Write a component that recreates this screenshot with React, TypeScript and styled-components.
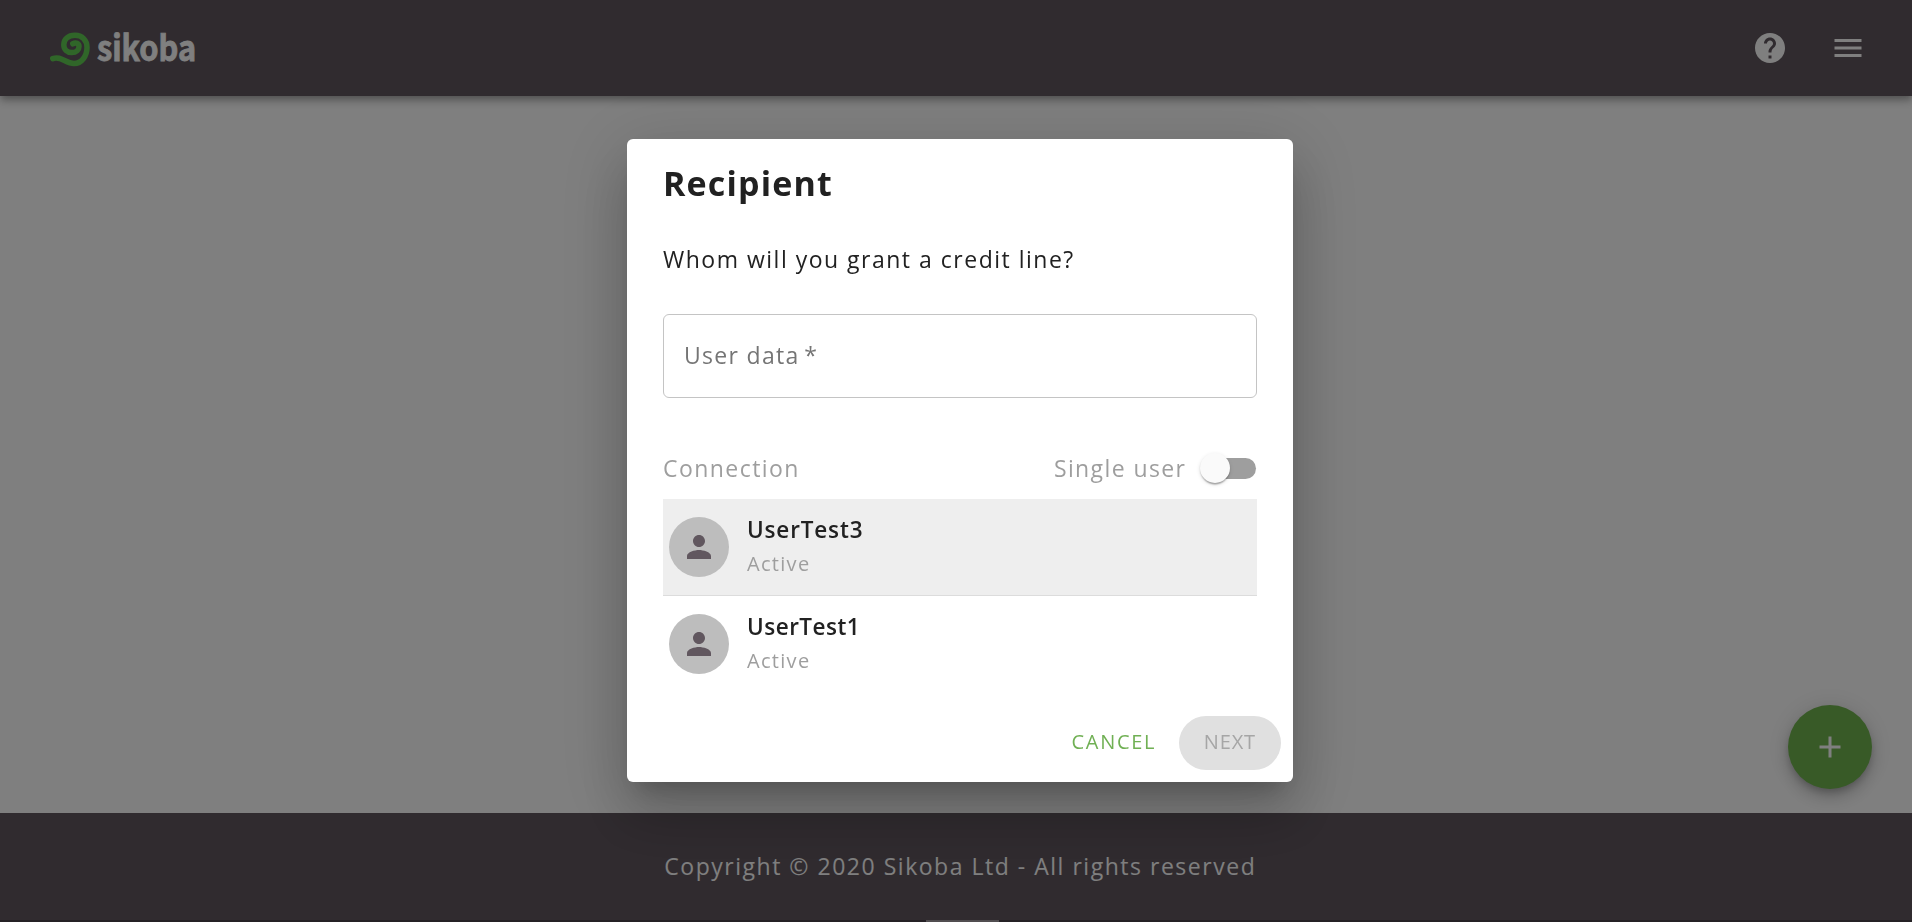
import React from 'react';
import styled, { createGlobalStyle } from 'styled-components';

const GlobalStyle = createGlobalStyle`
  * { box-sizing: border-box; }
  body { margin: 0; overflow: hidden; font-family: 'Open Sans', sans-serif; background: #fff; }
`;

const Page = styled.div`
  display: flex;
  flex-direction: column;
  height: 922px;
`;

const Header = styled.header`
  flex: none;
  height: 96px;
  display: flex;
  align-items: center;
  justify-content: space-between;
  padding: 0 46px 0 47px;
  background: #61575f;
  color: #fff;
  box-shadow: 0 3px 6px -1.5px rgba(0,0,0,.2), 0 6px 7.5px rgba(0,0,0,.14), 0 1.5px 15px rgba(0,0,0,.12);
`;

const Brand = styled.div`
  display: flex;
  align-items: center;
  gap: 6px;
`;

const Wordmark = styled.span`
  font-family: 'Noto Sans CJK JP', sans-serif;
  font-size: 35px;
  line-height: 40px;
  padding-bottom: 4px;
  font-weight: 700;
  -webkit-text-stroke: 0.8px #fff;
  transform: scaleX(0.88);
  transform-origin: left center;
`;

const HeaderActions = styled.div`
  display: flex;
  gap: 42px;
`;

const Icon = styled.svg`
  display: block;
  width: 36px;
  height: 36px;
  fill: currentColor;
`;

const Main = styled.main`
  flex: 1;
  display: flex;
  justify-content: flex-end;
  align-items: flex-end;
  padding: 0 40px 24px;
`;

const Fab = styled.button`
  width: 84px;
  height: 84px;
  padding: 0;
  border: 0;
  border-radius: 50%;
  display: grid;
  place-items: center;
  background: #70b54e;
  color: #fff;
  box-shadow: 0 4.5px 7.5px -1.5px rgba(0,0,0,.2), 0 9px 15px rgba(0,0,0,.14), 0 1.5px 27px rgba(0,0,0,.12);
`;

const Footer = styled.footer`
  flex: none;
  height: 107px;
  padding: 0 0 1px 7px;
  display: grid;
  place-items: center;
  background: #61575f;
  color: #fff;
`;

const BottomStrip = styled.div`
  flex: none;
  height: 2px;
  padding-left: 13px;
  display: flex;
  justify-content: center;
  background: #4a434a;
`;

const StripHandle = styled.div`
  width: 73px;
  background: #a29da1;
`;

const Backdrop = styled.div`
  position: fixed;
  inset: 0;
  display: flex;
  justify-content: center;
  align-items: flex-start;
  padding: 139px 0 0 8px;
  background: rgba(0,0,0,.5);
`;

const Dialog = styled.section`
  width: 666px;
  height: 643px;
  display: flex;
  flex-direction: column;
  padding: 22px 36px 0;
  background: #fff;
  border-radius: 6px;
  box-shadow: 0 16.5px 22.5px -10.5px rgba(0,0,0,.2), 0 36px 57px 4.5px rgba(0,0,0,.14), 0 13.5px 69px 12px rgba(0,0,0,.12);
`;

const Text = styled.span<{ $size?: number; $weight?: number; $color?: string; $spacing?: number }>`
  font-size: ${(p) => p.$size ?? 23}px;
  font-weight: ${(p) => p.$weight ?? 400};
  color: ${(p) => p.$color ?? 'inherit'};
  letter-spacing: ${(p) => p.$spacing ?? 0}px;
  margin-right: ${(p) => -(p.$spacing ?? 0)}px;
  line-height: 34px;
  white-space: nowrap;
`;

const Title = styled.h2`
  margin: 0;
  height: 43px;
  display: flex;
  align-items: center;
`;

const Prompt = styled.p`
  margin: 38px 0 0;
  height: 34px;
  display: flex;
  align-items: center;
`;

const Field = styled.div`
  margin-top: 38px;
  height: 84px;
  display: flex;
  align-items: center;
  gap: 6px;
  padding: 0 20px 2px;
  border: 1px solid #c4c4c4;
  border-radius: 6px;
`;

const ListHeader = styled.div`
  margin: 51px 0 12px;
  height: 38px;
  display: flex;
  align-items: center;
  justify-content: space-between;
`;

const SwitchLabel = styled.label`
  display: flex;
  align-items: center;
  gap: 20px;
`;

const Track = styled.span`
  width: 51px;
  height: 21px;
  margin-right: 1px;
  display: flex;
  align-items: center;
  border-radius: 11px;
  background: #9e9e9e;
`;

const Thumb = styled.span`
  flex: none;
  width: 30px;
  height: 30px;
  margin-left: -5px;
  border-radius: 50%;
  background: #fafafa;
  box-shadow: 0 3px 1.5px -1.5px rgba(0,0,0,.2), 0 1.5px 1.5px rgba(0,0,0,.14), 0 1.5px 4.5px rgba(0,0,0,.12);
`;

const Row = styled.div<{ $selected?: boolean }>`
  flex: none;
  height: 97px;
  display: flex;
  align-items: center;
  gap: 18px;
  padding-left: 6px;
  border-bottom: 1px solid ${(p) => (p.$selected ? '#dcdcdc' : 'transparent')};
  background: ${(p) => (p.$selected ? '#eeeeee' : '#fff')};
`;

const Avatar = styled.div`
  width: 60px;
  height: 60px;
  display: grid;
  place-items: center;
  border-radius: 50%;
  background: #bdbdbd;
  color: #61575f;
`;

const RowText = styled.div`
  display: flex;
  flex-direction: column;
`;

const Actions = styled.div`
  display: flex;
  justify-content: flex-end;
  align-items: center;
  gap: 12px;
  margin: 23px -24px 0 0;
`;

const Button = styled.button<{ $filled?: boolean }>`
  height: 54px;
  width: ${(p) => (p.$filled ? 102 : 107)}px;
  padding: 0 1px 2px 0;
  border: 0;
  border-radius: 27px;
  display: flex;
  align-items: center;
  justify-content: center;
  font-family: inherit;
  background: ${(p) => (p.$filled ? '#e0e0e0' : 'transparent')};
`;

const users = [
  { name: 'UserTest3', spacing: 0.85 },
  { name: 'UserTest1', spacing: 0.5 },
];

export default function App() {
  return (
    <>
      <GlobalStyle />
      <Page>
        <Header>
          <Brand>
            <svg width="44" height="38" viewBox="0 0 44 38" fill="none" stroke="#60cc52" strokeWidth="5.5" strokeLinecap="round" strokeLinejoin="round">
              <path d="M5.8 29.6C14 26.5 18.5 34.5 27 34.5C34.5 34.5 40 27 40 18.5C40 11 35 6.3 28 6.3C21 6.3 16.8 10.5 16.8 15.8C16.8 20.6 20.2 23.6 24.7 23.6C29.3 23.6 32 20.7 32 17.4C32 14.4 29 13.2 25.8 14.8" />
            </svg>
            <Wordmark>sikoba</Wordmark>
          </Brand>
          <HeaderActions>
            <Icon viewBox="0 0 24 24"><path d="M12 2C6.48 2 2 6.48 2 12s4.48 10 10 10 10-4.48 10-10S17.52 2 12 2zm1 17h-2v-2h2v2zm2.07-7.75l-.9.92C13.45 12.9 13 13.5 13 15h-2v-.5c0-1.1.45-2.1 1.17-2.83l1.24-1.26c.37-.36.59-.86.59-1.41 0-1.1-.9-2-2-2s-2 .9-2 2H8c0-2.21 1.79-4 4-4s4 1.79 4 4c0 .88-.36 1.68-.93 2.25z" /></Icon>
            <Icon viewBox="0 0 24 24"><path d="M3 18h18v-2H3v2zm0-5h18v-2H3v2zm0-7v2h18V6H3z" /></Icon>
          </HeaderActions>
        </Header>
        <Main>
          <Fab><Icon viewBox="0 0 24 24"><path d="M19 13h-6v6h-2v-6H5v-2h6V5h2v6h6v2z" /></Icon></Fab>
        </Main>
        <Footer><Text $spacing={1.52}>Copyright © 2020 Sikoba Ltd - All rights reserved</Text></Footer>
        <BottomStrip><StripHandle /></BottomStrip>
      </Page>
      <Backdrop>
        <Dialog>
          <Title><Text $size={34} $weight={700} $color="#212121" $spacing={1.15}>Recipient</Text></Title>
          <Prompt><Text $color="#212121" $spacing={1.5}>Whom will you grant a credit line?</Text></Prompt>
          <Field><Text $color="#757575" $spacing={1.3}>User data</Text><Text $color="#757575">*</Text></Field>
          <ListHeader>
            <Text $color="#9e9e9e" $spacing={1.45}>Connection</Text>
            <SwitchLabel><Text $color="#9e9e9e" $spacing={1.4}>Single user</Text><Track><Thumb /></Track></SwitchLabel>
          </ListHeader>
          {users.map((user, i) => (
            <Row key={user.name} $selected={i === 0}>
              <Avatar><Icon viewBox="0 0 24 24"><path d="M12 12c2.21 0 4-1.79 4-4s-1.79-4-4-4-4 1.79-4 4 1.79 4 4 4zm0 2c-2.67 0-8 1.34-8 4v2h16v-2c0-2.66-5.33-4-8-4z" /></Icon></Avatar>
              <RowText>
                <Text $size={22.5} $weight={600} $color="#212121" $spacing={user.spacing}>{user.name}</Text>
                <Text $size={20} $color="#9e9e9e" $spacing={1.3}>Active</Text>
              </RowText>
            </Row>
          ))}
          <Actions>
            <Button><Text $size={20} $color="#70b054" $spacing={1.7}>CANCEL</Text></Button>
            <Button $filled><Text $size={20} $color="#a6a6a6" $spacing={0.85}>NEXT</Text></Button>
          </Actions>
        </Dialog>
      </Backdrop>
    </>
  );
}
